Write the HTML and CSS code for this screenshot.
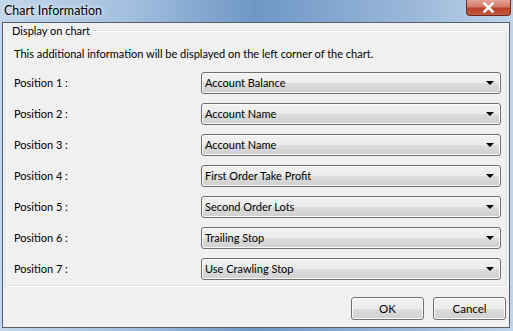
FILE: index.html
```html
<!DOCTYPE html>
<html lang="en">
<head>
    <meta charset="UTF-8">
    <title>Chart Information</title>
    <link rel="stylesheet" href="styles.css">
</head>
<body>
    <div class="window">
        <div class="titlebar">
            <span class="title">Chart Information</span>
            <div class="close-btn">
                <svg width="13" height="11" viewBox="0 0 13 11"><path d="M2.5 1.5 L10.5 9.5 M10.5 1.5 L2.5 9.5" stroke="#fff" stroke-width="2.6" stroke-linecap="square"/></svg>
            </div>
        </div>
        <div class="client">
            <fieldset class="group">
                <legend>Display on chart</legend>
                <p class="info">This additional information will be displayed on the left corner of the chart.</p>

                <div class="row">
                    <span class="label">Position 1 :</span>
                    <div class="combo"><span>Account Balance</span><i class="arrow"></i></div>
                </div>
                <div class="row">
                    <span class="label">Position 2 :</span>
                    <div class="combo"><span>Account Name</span><i class="arrow"></i></div>
                </div>
                <div class="row">
                    <span class="label">Position 3 :</span>
                    <div class="combo"><span>Account Name</span><i class="arrow"></i></div>
                </div>
                <div class="row">
                    <span class="label">Position 4 :</span>
                    <div class="combo"><span>First Order Take Profit</span><i class="arrow"></i></div>
                </div>
                <div class="row">
                    <span class="label">Position 5 :</span>
                    <div class="combo"><span>Second Order Lots</span><i class="arrow"></i></div>
                </div>
                <div class="row">
                    <span class="label">Position 6 :</span>
                    <div class="combo"><span>Trailing Stop</span><i class="arrow"></i></div>
                </div>
                <div class="row">
                    <span class="label">Position 7 :</span>
                    <div class="combo"><span>Use Crawling Stop</span><i class="arrow"></i></div>
                </div>
            </fieldset>

            <div class="buttons">
                <button>OK</button>
                <button>Cancel</button>
            </div>
        </div>
    </div>
</body>
</html>
```

FILE: styles.css
```css
* {
    box-sizing: border-box;
}

body {
    margin: 0;
    width: 513px;
    height: 331px;
    overflow: hidden;
    font-family: Lato, "Liberation Sans", sans-serif;
    font-size: 11px;
    color: #000;
}

.window {
    width: 513px;
    height: 331px;
    background: linear-gradient(90deg, #c3d6eb 0%, #a3bfde 25%, #6f97c6 50%, #9ab7d9 80%, #c0d4ea 100%);
    padding: 0 3px 3px 2px;
    display: flex;
    flex-direction: column;
}

.titlebar {
    height: 22px;
    display: flex;
    align-items: flex-start;
    justify-content: space-between;
}

.title {
    margin-top: 3px;
    margin-left: 2px;
    font-size: 12.5px;
    color: #000;
    text-shadow: 0 0 6px #e8f0f8, 0 0 3px #e8f0f8;
}

.close-btn {
    width: 45px;
    height: 16px;
    margin-right: -1px;
    border: 1px solid #6b2a22;
    border-top: none;
    border-radius: 0 0 4px 4px;
    background: linear-gradient(#e3a395 0%, #d27a66 45%, #b8402a 55%, #c45a40 100%);
    display: flex;
    align-items: center;
    justify-content: center;
}

.client {
    flex: 1;
    background: #f0f0f0;
    border: 1px solid #565f6a;
    padding: 0 2px 0 2px;
    display: flex;
    flex-direction: column;
}

.group {
    margin: 1px 0 0 0;
    padding: 4px 5px 4px 8px;
    border: 1px solid #d5dfe5;
    border-radius: 2px;
    box-shadow: inset 1px 1px 0 #fff, 1px 1px 0 #fff;
    height: 262px;
}

.group legend {
    padding: 0 2px;
    margin-left: -4px;
}

.info {
    margin: 6px 0 7px 0;
}

.row {
    display: flex;
    align-items: center;
    justify-content: space-between;
    height: 31px;
}

.combo {
    width: 300px;
    height: 22px;
    border: 1px solid #707070;
    border-radius: 3px;
    background: linear-gradient(#f2f2f2 0%, #ebebeb 50%, #dddddd 50%, #cfcfcf 100%);
    box-shadow: inset 0 0 0 1px #fafafa;
    display: flex;
    align-items: center;
    justify-content: space-between;
    padding: 0 6px 0 3px;
}

.arrow {
    width: 0;
    height: 0;
    border-left: 4px solid transparent;
    border-right: 4px solid transparent;
    border-top: 4px solid #000;
}

.buttons {
    display: flex;
    justify-content: flex-end;
    gap: 9px;
    padding: 11px 1px 0 0;
}

.buttons button {
    width: 73px;
    height: 23px;
    font-family: inherit;
    font-size: 11.5px;
    border: 1px solid #707070;
    border-radius: 3px;
    background: linear-gradient(#f2f2f2 0%, #ebebeb 50%, #dddddd 50%, #cfcfcf 100%);
    box-shadow: inset 0 0 0 1px #fcfcfc;
    color: #000;
}
```
